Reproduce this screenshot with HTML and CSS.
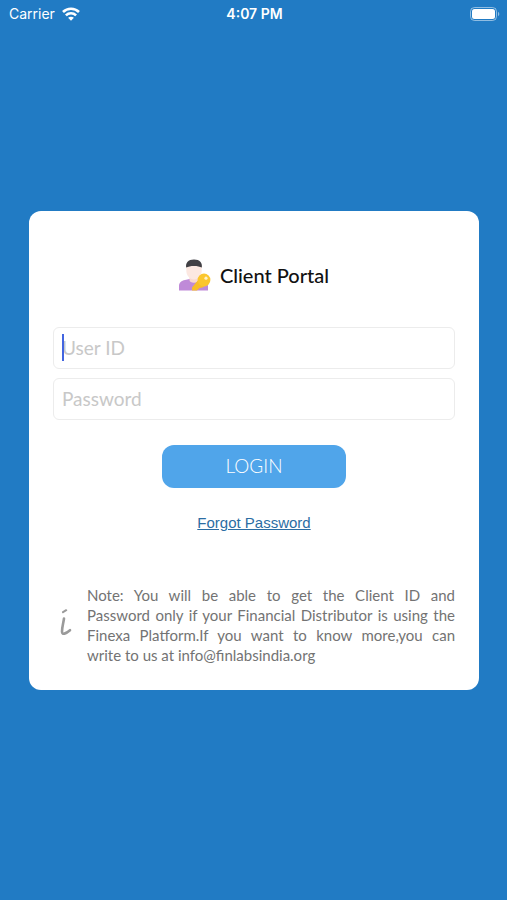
FILE: index.html
```html
<!DOCTYPE html>
<html lang="en">
<head>
    <meta charset="UTF-8">
    <meta name="viewport" content="width=device-width, initial-scale=1.0">
    <title>Client Portal</title>
    <link rel="stylesheet" href="styles.css">
</head>
<body>
    <header class="status-bar">
        <div class="carrier">
            <span>Carrier</span>
            <svg width="18" height="14" viewBox="0 0 18 14" fill="none" stroke="#fff" stroke-width="2.6">
                <path d="M1 5C5.4.6 12.6.6 17 5"/>
                <path d="M3.9 8.4C6.8 5.6 11.2 5.6 14.1 8.4"/>
                <path d="M9 13.8L6.1 10.8C7.7 9.3 10.3 9.3 11.9 10.8Z" fill="#fff" stroke="none"/>
            </svg>
        </div>
        <div class="clock">4:07 PM</div>
        <div class="battery">
            <svg width="30" height="14" viewBox="0 0 30 14">
                <rect x="0.5" y="0.5" width="26" height="13" rx="4" fill="none" stroke="#fff" stroke-opacity="0.5"/>
                <rect x="2" y="2" width="23" height="10" rx="2.5" fill="#fff"/>
                <path d="M28 4.8C29.8 5.5 29.8 8.5 28 9.2Z" fill="#fff" fill-opacity="0.5"/>
            </svg>
        </div>
    </header>

    <main class="page">
        <form class="card">
            <h1 class="title">
                <svg width="32" height="32" viewBox="0 0 32 32">
                    <path d="M0 31.5V27C0 23.5 2.5 21.5 6 21L10.5 20H19.5L24 21C27 21.5 29 23.5 29 27V31.5Z" fill="#bf8ad8"/>
                    <path d="M10.5 16H19.5V21C19.5 22.8 17.5 23.8 15 23.8S10.5 22.8 10.5 21Z" fill="#f8d9d0"/>
                    <path d="M7.3 6H22.7V11.5C22.7 16.4 19.4 20.5 15 20.5S7.3 16.4 7.3 11.5Z" fill="#fce8e1"/>
                    <path d="M7.2 8.6C6.4 3.6 9.2.4 15 .4S23.6 3.6 22.8 8.6C20.8 7.6 18.3 7 15 7S9.2 7.6 7.2 8.6Z" fill="#414045"/>
                    <path d="M20 20L13 28.5V31.5H18L20.5 29L23.5 28.4L27.5 25.5Z" fill="#f8bd29"/>
                    <circle cx="25" cy="21" r="6.4" fill="#fbc62d"/>
                    <circle cx="27" cy="19.2" r="1.6" fill="#fff1c7"/>
                </svg>
                Client Portal
            </h1>

            <div class="fields">
                <div class="field">
                    <input type="text" name="user" placeholder="User ID" aria-label="User ID">
                    <span class="caret"></span>
                </div>
                <div class="field">
                    <input type="password" name="password" placeholder="Password" aria-label="Password">
                </div>
            </div>

            <button class="login" type="button">LOGIN</button>
            <a class="forgot" href="#">Forgot Password</a>

            <div class="note">
                <svg class="info" width="12" height="32" viewBox="0 0 12 32" fill="none" stroke="#9a9a9a" stroke-linecap="round" stroke-linejoin="round">
                    <path d="M3 2.8L6.2.8" transform="translate(0 .4)" stroke-width="2"/>
                    <path d="M4 9.5C3.4 14 2 18.5 2 22.5C2 26.5 6 24.6 10 21.2" stroke-width="2.6"/>
                </svg>
                <p>
                    <span>Note: You will be able to get the Client ID and</span>
                    <span>Password only if your Financial Distributor is using the</span>
                    <span>Finexa Platform.If you want to know more,you can</span>
                    <span>write to us at info@finlabsindia.org</span>
                </p>
            </div>
        </form>
    </main>
</body>
</html>
```
FILE: styles.css
```css
* {
    box-sizing: border-box;
}
body {
    display: flex;
    flex-direction: column;
    min-height: 100vh;
    margin: 0;
    background: #217bc4;
    font-family: Lato, sans-serif;
}
.status-bar {
    display: grid;
    grid-template-columns: 1fr auto 1fr;
    align-items: center;
    height: 27px;
    padding: 0 7px 0 9px;
    color: #fff;
    font-family: Inter, sans-serif;
    font-size: 14px;
}
.carrier {
    display: flex;
    align-items: center;
    gap: 7px;
}
.clock {
    font-weight: 600;
}
.battery {
    display: flex;
    justify-content: flex-end;
}
.page {
    display: flex;
    flex: 1;
    align-items: center;
    justify-content: center;
    padding: 0 28px 27px 29px;
}
.card {
    display: flex;
    flex-direction: column;
    align-items: center;
    width: 100%;
    max-width: 600px;
    padding: 48px 24px 25px;
    background: #fff;
    border-radius: 12px;
}
.title {
    display: flex;
    align-items: center;
    gap: 9px;
    margin: 0 0 36px;
    color: #111;
    font-size: 20px;
    font-weight: 500;
    line-height: 32px;
}
.fields {
    display: flex;
    flex-direction: column;
    gap: 9px;
    width: 100%;
}
.field {
    position: relative;
}
.field input {
    display: block;
    width: 100%;
    height: 42px;
    padding: 0 8px;
    border: 1px solid #ececec;
    border-radius: 6px;
    outline: none;
    background: #fff;
    font-family: inherit;
    font-size: 19px;
}
.field input::placeholder {
    color: #c8c8c8;
}
.caret {
    position: absolute;
    top: 7px;
    left: 9px;
    width: 2px;
    height: 27px;
    background: #4265e0;
}
.login {
    width: 184px;
    height: 43px;
    margin-top: 25px;
    padding: 0 0 2px;
    border: none;
    border-radius: 12px;
    background: #50a5ea;
    color: #fff;
    font-family: inherit;
    font-size: 19px;
    font-weight: 300;
    cursor: pointer;
}
.forgot {
    margin-top: 25px;
    color: #2b6da3;
    font-family: "Liberation Sans", sans-serif;
    font-size: 15px;
    line-height: 20px;
}
.note {
    display: flex;
    align-items: center;
    gap: 15px;
    width: 100%;
    margin-top: 52px;
    padding-left: 7px;
}
.info {
    flex: none;
}
.note p {
    flex: 1;
    margin: 0;
    color: #737373;
    font-size: 15px;
    line-height: 20px;
    text-align: justify;
}
.note span {
    display: block;
    text-align-last: justify;
}
.note span:last-child {
    text-align-last: left;
}
```
